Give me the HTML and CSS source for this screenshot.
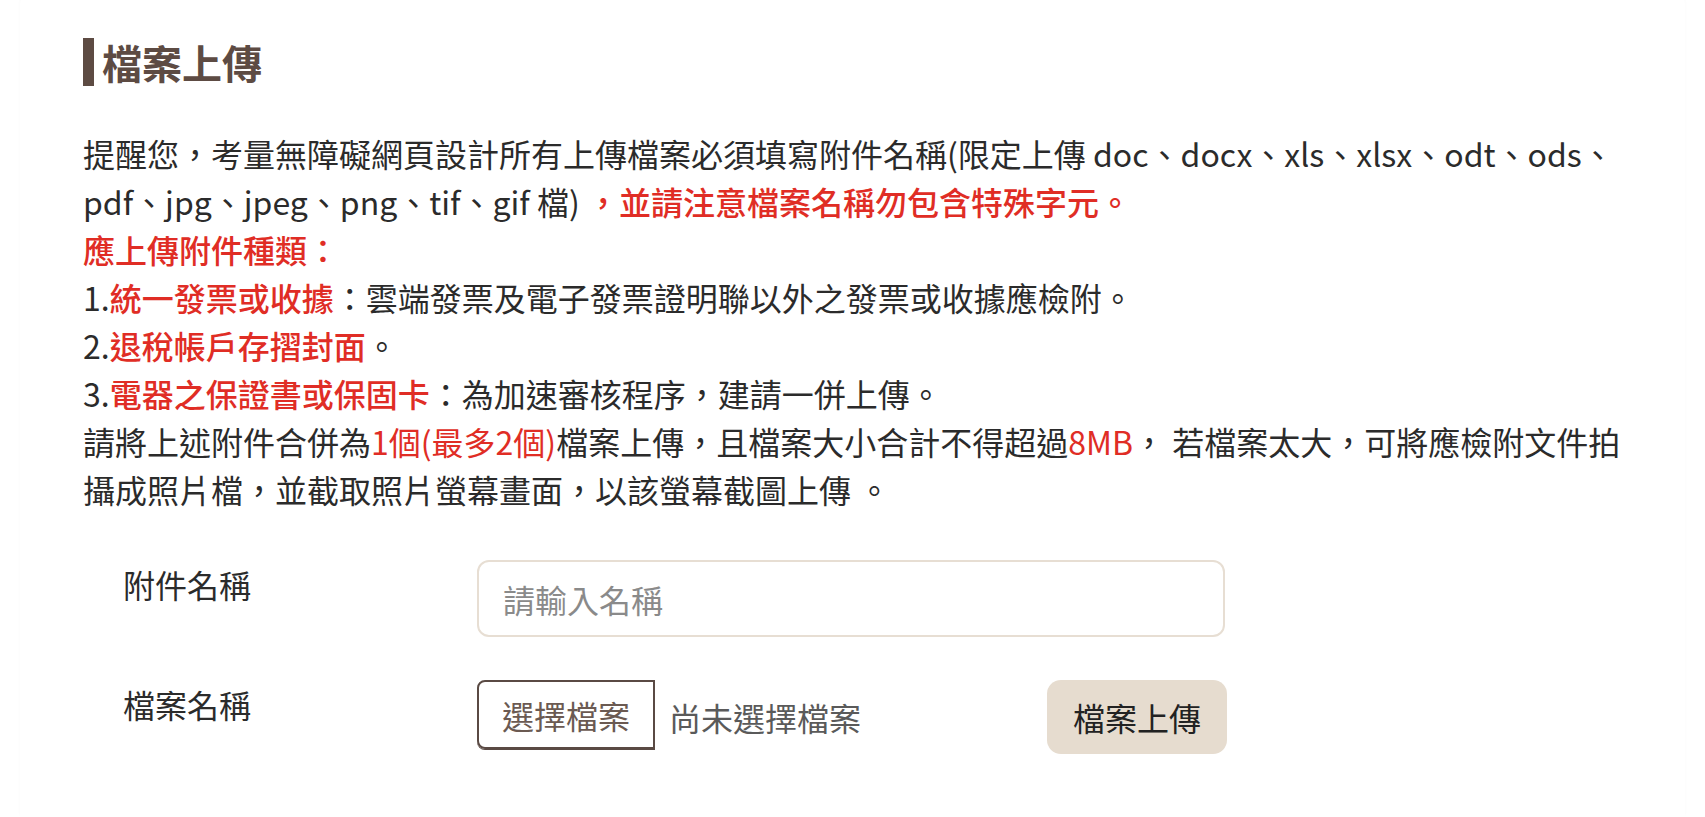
FILE: index.html
```html
<!DOCTYPE html>
<html lang="zh-Hant">
<head>
    <meta charset="UTF-8">
    <meta name="viewport" content="width=device-width, initial-scale=1.0">
    <title>檔案上傳</title>
    <link rel="stylesheet" href="styles.css">
</head>
<body>
    <section class="card">
        <h2 class="title">檔案上傳</h2>

        <div class="notice">
            <p>提醒您，考量無障礙網頁設計所有上傳檔案必須填寫附件名稱(限定上傳 doc、docx、xls、xlsx、odt、ods、pdf、jpg、jpeg、png、tif、gif 檔) <span class="red strong">，並請注意檔案名稱勿包含特殊字元。</span></p>
            <p class="red strong">應上傳附件種類：</p>
            <p>1.<span class="red strong">統一發票或收據</span>：雲端發票及電子發票證明聯以外之發票或收據應檢附。</p>
            <p>2.<span class="red strong">退稅帳戶存摺封面</span>。</p>
            <p>3.<span class="red strong">電器之保證書或保固卡</span>：為加速審核程序，建請一併上傳。</p>
            <p>請將上述附件合併為<span class="red">1個(最多2個)</span>檔案上傳，且檔案大小合計不得超過<span class="red">8MB</span>， 若檔案太大，可將應檢附文件拍攝成照片檔，並截取照片螢幕畫面，以該螢幕截圖上傳 。</p>
        </div>

        <form class="upload-form" id="uploadForm">
            <div class="form-row">
                <label class="row-label" for="attachName">附件名稱</label>
                <div class="field">
                    <input type="text" id="attachName" name="attachName" placeholder="請輸入名稱">
                </div>
            </div>

            <div class="form-row">
                <label class="row-label" for="attachFile">檔案名稱</label>
                <div class="field">
                    <div class="file-picker">
                        <label class="file-btn" for="attachFile">選擇檔案</label>
                        <span class="file-name" id="fileName">尚未選擇檔案</span>
                        <input type="file" id="attachFile" name="attachFile" hidden>
                    </div>
                    <button type="button" class="upload-btn">檔案上傳</button>
                </div>
            </div>
        </form>
    </section>
</body>
</html>
```

FILE: styles.css
```css
body {
    margin: 0;
    font-family: "Noto Sans CJK TC", "Noto Sans", sans-serif;
    color: #2b2b2b;
    background-color: #fff;
}
.card {
    box-sizing: border-box;
    min-height: calc(100vh + 24px);
    margin: -24px 20px 0;
    padding: 62px 63px 0;
    border-radius: 30px 30px 0 0;
    box-shadow: 0 -2px 3px rgba(0, 0, 0, 0.03);
    background-color: #fff;
}
.title {
    margin: 0;
    padding-left: 8px;
    border-left: 11px solid #5d4b43;
    font-size: 40px;
    line-height: 48px;
    font-weight: 700;
    color: #5d4b43;
}
.notice {
    margin-top: 43px;
    font-size: 32px;
    line-height: 48px;
}
.notice p {
    margin: 0;
}
.red {
    color: #e02d25;
}
.strong {
    font-weight: 500;
}
.upload-form {
    margin-top: 47px;
    padding-left: 40px;
    display: flex;
    flex-direction: column;
    gap: 43px;
}
.form-row {
    display: flex;
    align-items: flex-start;
}
.row-label {
    width: 354px;
    flex-shrink: 0;
    font-size: 32px;
    line-height: 48px;
    color: #2b2b2b;
}
.field {
    width: 750px;
    display: flex;
    justify-content: space-between;
    align-items: flex-start;
}
.field input[type="text"] {
    width: 748px;
    height: 77px;
    box-sizing: border-box;
    padding: 0 24px;
    border: 2px solid #e7ded3;
    border-radius: 12px;
    font-family: inherit;
    font-size: 32px;
    color: #2b2b2b;
    outline: none;
}
.field input::placeholder {
    color: #8a8a8a;
}
.file-picker {
    display: flex;
    align-items: center;
    gap: 14px;
}
.file-btn {
    width: 178px;
    height: 69px;
    box-sizing: border-box;
    display: flex;
    align-items: center;
    justify-content: center;
    border: 2px solid #5a4a44;
    border-radius: 8px 0 0 8px;
    box-shadow: 0 1px 0 #5a4a44;
    font-size: 32px;
    color: #6b5a52;
    cursor: pointer;
}
.file-name {
    font-size: 32px;
    color: #5a5a5a;
    padding-top: 4px;
}
.upload-btn {
    width: 180px;
    height: 74px;
    border: none;
    border-radius: 14px;
    background-color: #e6dccf;
    font-family: inherit;
    font-size: 32px;
    color: #222;
    cursor: pointer;
}
.upload-btn:hover {
    background-color: #dccfbe;
}
```
